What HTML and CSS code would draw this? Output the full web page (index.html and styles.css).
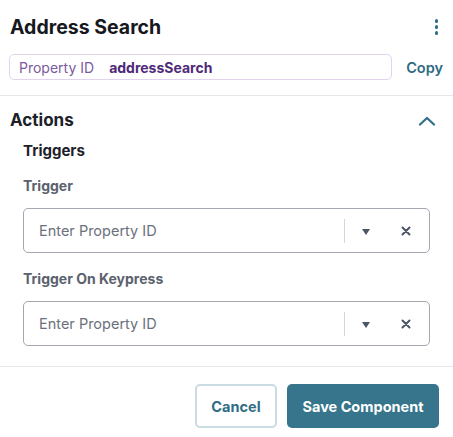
FILE: index.html
```html
<!DOCTYPE html>
<html>
<head>
<meta charset="utf-8">
<link rel="stylesheet" href="styles.css">
</head>
<body>
<div class="panel">
  <header class="header">
    <div class="title-row">
      <h1 class="title">Address Search</h1>
      <span class="kebab" aria-label="More"><i></i><i></i><i></i></span>
    </div>
    <div class="prop-row">
      <div class="prop-box">
        <span class="prop-label">Property ID</span>
        <span class="prop-value">addressSearch</span>
      </div>
      <span class="copy">Copy</span>
    </div>
  </header>

  <section class="actions">
    <div class="section-head">
      <h2 class="section-title">Actions</h2>
      <svg class="chevron" width="18" height="10" viewBox="0 0 18 10"><path d="M2 8.5 L9 2 L16 8.5" fill="none" stroke="#2f6e85" stroke-width="2.2" stroke-linecap="round" stroke-linejoin="round"/></svg>
    </div>
    <div class="group">
      <h3 class="group-title">Triggers</h3>
      <div class="field">
        <label class="field-label">Trigger</label>
        <div class="select">
          <span class="placeholder">Enter Property ID</span>
          <span class="sep"></span>
          <span class="caret"></span>
          <svg class="clear" width="10" height="10" viewBox="0 0 10 10"><path d="M1.5 1.5 L8.5 8.5 M8.5 1.5 L1.5 8.5" stroke="#4b5563" stroke-width="2" stroke-linecap="round"/></svg>
        </div>
      </div>
      <div class="field field-second">
        <label class="field-label">Trigger On Keypress</label>
        <div class="select">
          <span class="placeholder">Enter Property ID</span>
          <span class="sep"></span>
          <span class="caret"></span>
          <svg class="clear" width="10" height="10" viewBox="0 0 10 10"><path d="M1.5 1.5 L8.5 8.5 M8.5 1.5 L1.5 8.5" stroke="#4b5563" stroke-width="2" stroke-linecap="round"/></svg>
        </div>
      </div>
    </div>
  </section>

  <footer class="footer">
    <button class="btn btn-cancel">Cancel</button>
    <button class="btn btn-save">Save Component</button>
  </footer>
</div>
</body>
</html>
```
FILE: styles.css
```css
* { box-sizing: border-box; }
html, body { margin: 0; padding: 0; background: #fff; }
body {
  font-family: Inter, "Noto Sans", "Liberation Sans", sans-serif;
  color: #1f2430;
  width: 453px;
}
.panel { width: 453px; }

.header {
  padding: 15px 10px 15px 9px;
  border-bottom: 1px solid #e4e6ea;
}
.title-row {
  display: flex;
  align-items: center;
  justify-content: space-between;
  height: 24px;
  padding-left: 1px;
}
.title {
  margin: 0;
  font-size: 19.5px;
  line-height: 24px;
  font-weight: 700;
  color: #16181d;
}
.kebab {
  display: flex;
  flex-direction: column;
  gap: 2.5px;
  margin-right: 5px;
}
.kebab i {
  display: block;
  width: 3.5px;
  height: 3.5px;
  border-radius: 50%;
  background: #2f6e85;
}
.prop-row {
  display: flex;
  align-items: center;
  margin-top: 15px;
}
.prop-box {
  flex: 1;
  height: 26px;
  border: 1px solid #e3d4ee;
  border-radius: 5px;
  display: flex;
  align-items: center;
  padding-left: 9px;
  font-size: 14px;
}
.prop-label { color: #7a5a9e; }
.prop-value {
  color: #4e2a78;
  font-weight: 700;
  margin-left: 15px;
}
.copy {
  margin-left: 14px;
  font-size: 14.5px;
  font-weight: 600;
  color: #2e6b82;
}

.actions {
  padding: 13px 10px 20px 10px;
  border-bottom: 1px solid #e4e6ea;
}
.section-head {
  display: flex;
  align-items: center;
  justify-content: space-between;
  height: 22px;
}
.section-title {
  margin: 0;
  font-size: 17px;
  line-height: 22px;
  font-weight: 700;
  color: #1d2129;
}
.chevron { margin-right: 7px; margin-top: 2px; }

.group { padding-left: 13px; padding-right: 13px; }
.group-title {
  margin: 10px 0 0 0;
  font-size: 15px;
  line-height: 20px;
  font-weight: 700;
  color: #1d2129;
}
.field { margin-top: 15px; }
.field-second { margin-top: 16px; }
.field-label {
  display: block;
  font-size: 14px;
  line-height: 20px;
  font-weight: 700;
  color: #5b626e;
}
.select {
  margin-top: 12px;
  height: 45px;
  border: 1px solid #a3a8b0;
  border-radius: 5px;
  display: flex;
  align-items: center;
  padding-left: 15px;
}
.placeholder {
  flex: 1;
  font-size: 14.5px;
  color: #6b717c;
}
.sep {
  width: 1px;
  height: 24px;
  background: #d3d6db;
}
.caret {
  width: 0;
  height: 0;
  border-left: 4.5px solid transparent;
  border-right: 4.5px solid transparent;
  border-top: 6px solid #4b5563;
  margin-left: 17px;
  margin-top: 2px;
}
.clear { margin-left: 31px; margin-right: 18px; }

.footer {
  display: flex;
  justify-content: flex-end;
  gap: 10px;
  padding: 17px 14px 0 0;
}
.btn {
  height: 44px;
  border-radius: 5px;
  font-family: Inter, "Noto Sans", "Liberation Sans", sans-serif;
  font-size: 14.5px;
  font-weight: 700;
  cursor: pointer;
}
.btn-cancel {
  width: 82px;
  background: #fff;
  color: #2f6e85;
  border: 2px solid #cbdbe2;
}
.btn-save {
  width: 152px;
  background: #36758c;
  color: #fff;
  border: none;
}
```
